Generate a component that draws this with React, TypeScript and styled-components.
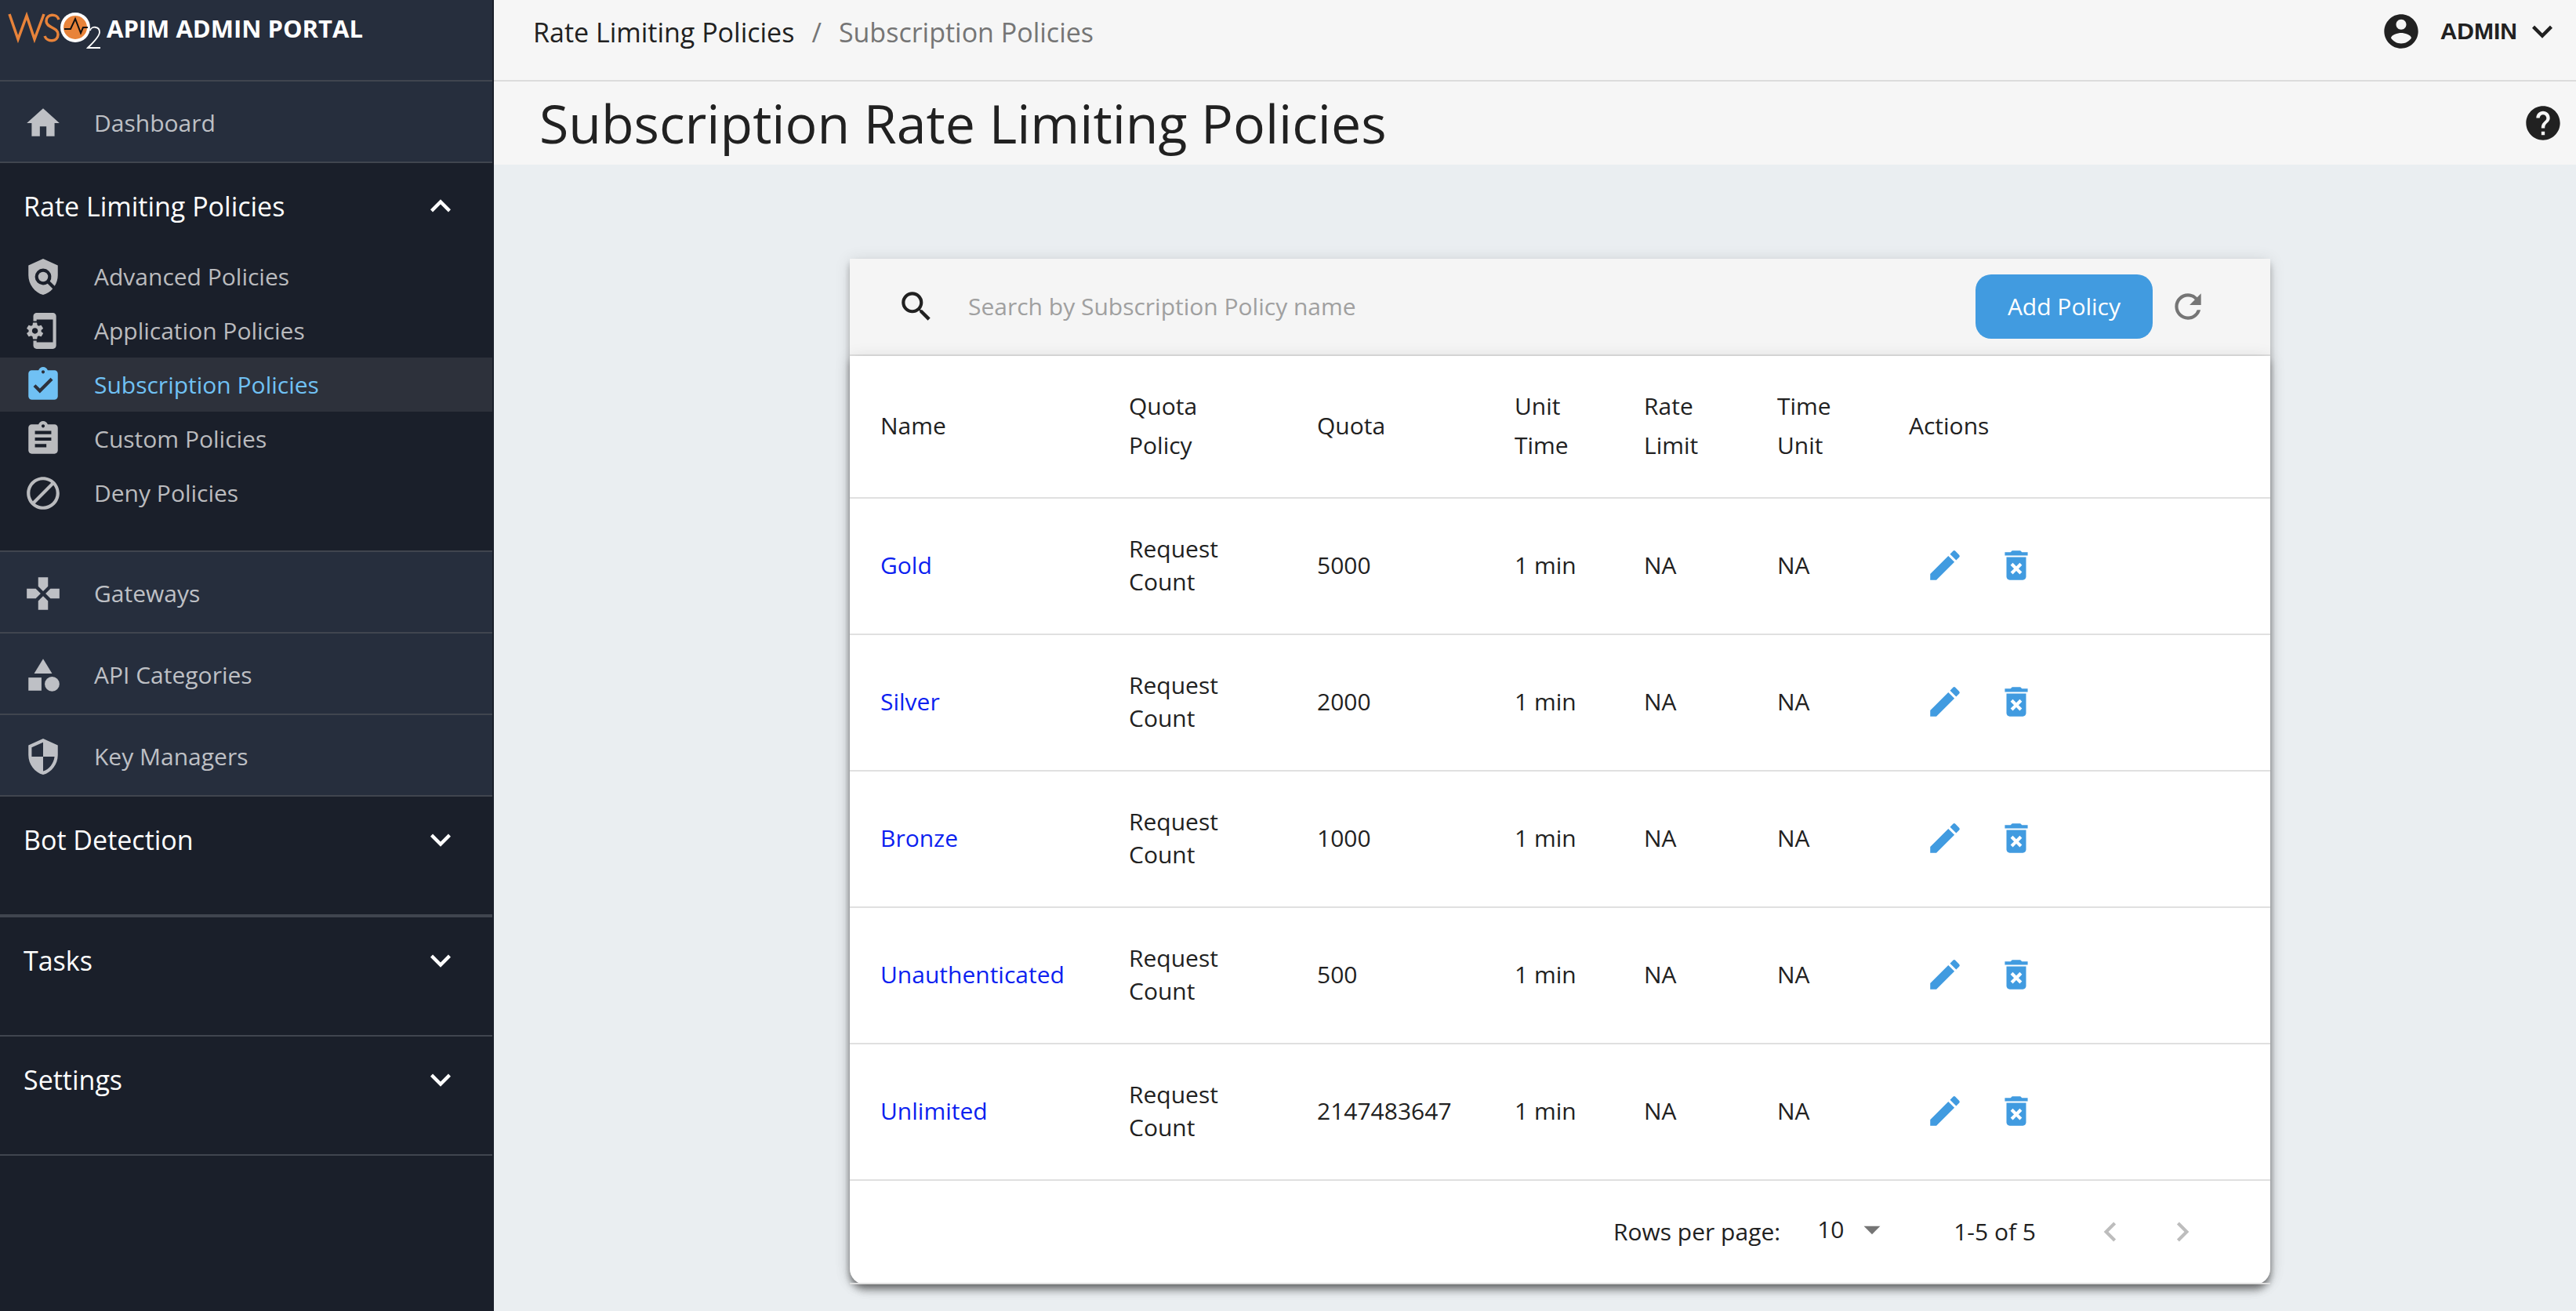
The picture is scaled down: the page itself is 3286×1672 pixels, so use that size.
import React from "react";
import styled, { createGlobalStyle } from "styled-components";
import {
  MdHome,
  MdPolicy,
  MdPhonelinkSetup,
  MdAssignmentTurnedIn,
  MdAssignment,
  MdBlock,
  MdGamepad,
  MdCategory,
  MdSecurity,
  MdHelp,
  MdSearch,
  MdRefresh,
  MdEdit,
  MdDeleteForever,
  MdChevronLeft,
  MdChevronRight,
  MdExpandMore,
  MdExpandLess,
  MdArrowDropDown,
} from "react-icons/md";

const GlobalStyle = createGlobalStyle`
  *, *::before, *::after { box-sizing: border-box; }
  body {
    margin: 0;
    background: #eaeef1;
    color: #212121;
    font-family: "Open Sans", "Noto Sans", sans-serif;
    font-size: 30px;
    line-height: 42px;
  }
  button, input, select { font: inherit; color: inherit; margin: 0; }
  a { text-decoration: none; }
`;

const Page = styled.div`
  display: flex;
  min-height: 100vh;
`;

/* ---------- sidebar ---------- */

const Sidebar = styled.nav`
  flex: 0 0 630px;
  background: #1a1f2a;
  border-right: 2px solid #1a1f2a;
`;

const Brand = styled.a`
  display: flex;
  align-items: flex-start;
  gap: 8px;
  height: 104px;
  padding: 10px 8px 0;
  background: #262e3d;
  border-bottom: 2px solid #40454f;
  color: #fff;
  font-size: 31px;
  font-weight: 700;
  line-height: 52px;
  white-space: nowrap;
`;

const NavRow = styled.a`
  display: flex;
  align-items: center;
  gap: 40px;
  height: 104px;
  padding: 3px 30px 0;
  background: #262e3d;
  border-bottom: 2px solid #40454f;
  color: #bec0c5;
`;

const Section = styled.section<{ $first?: boolean; $thick?: boolean }>`
  padding-bottom: ${(p) => (p.$first ? 39 : 40)}px;
  border-bottom: ${(p) => (p.$thick ? 4 : 2)}px solid #40454f;
`;

const SectionHeader = styled.button`
  display: flex;
  align-items: center;
  justify-content: space-between;
  width: 100%;
  height: 110px;
  padding: 0 40px 0 30px;
  border: 0;
  background: none;
  color: #fff;
  font-size: 34px;
  text-align: left;
`;

const SubItem = styled.a<{ $active?: boolean }>`
  display: flex;
  align-items: center;
  gap: 40px;
  height: 69px;
  padding: 0 30px;
  background: ${(p) => (p.$active ? "#2d313b" : "transparent")};
  color: ${(p) => (p.$active ? "#70c1f4" : "#babbbe")};
`;

/* ---------- main ---------- */

const Main = styled.main`
  flex: 1;
  min-width: 0;
`;

const TopBar = styled.header`
  display: flex;
  align-items: flex-start;
  justify-content: space-between;
  height: 104px;
  padding: 14px 17px 0 50px;
  background: #f6f6f6;
  border-bottom: 2px solid #dcdcdc;
`;

const Crumbs = styled.div`
  display: flex;
  gap: 22px;
  font-size: 34px;
  line-height: 54px;
  color: #757575;
`;

const CrumbLink = styled.a`
  color: #212121;
`;

const UserButton = styled.button`
  display: flex;
  align-items: center;
  padding: 0;
  border: 0;
  background: none;
  font-family: "Liberation Sans", Arial, sans-serif;
  font-weight: 700;
  line-height: 52px;
`;

const UserName = styled.span`
  margin: 0 6px 0 24px;
`;

const TitleBar = styled.div`
  display: flex;
  align-items: center;
  justify-content: space-between;
  height: 106px;
  padding: 0 16px 0 58px;
  background: #f6f6f6;
`;

const Title = styled.h1`
  margin: 0;
  font-size: 68px;
  font-weight: 400;
  line-height: 92px;
`;

const IconButton = styled.button`
  display: inline-flex;
  padding: 0;
  border: 0;
  background: none;
`;

const Content = styled.div`
  display: flex;
  justify-content: center;
  padding: 120px 0 32px 64px;
`;

const elevation = `
  box-shadow:
    0 4px 8px -2px rgba(0, 0, 0, 0.2),
    0 8px 10px rgba(0, 0, 0, 0.14),
    0 2px 20px rgba(0, 0, 0, 0.12);
`;

const Card = styled.div`
  flex: 1;
  max-width: 1812px;
  border-radius: 0 0 20px 20px;
  ${elevation}
`;

const Toolbar = styled.div`
  display: flex;
  align-items: center;
  height: 124px;
  padding: 0 80px 0 60px;
  background: #f5f5f5;
  border-bottom: 2px solid #e0e0e0;
`;

const SearchBox = styled.label`
  flex: 1;
  display: flex;
  align-items: center;
  gap: 41px;
`;

const SearchInput = styled.input`
  flex: 1;
  padding: 0;
  border: 0;
  outline: 0;
  background: none;
  &::placeholder {
    color: #a0a0a0;
    opacity: 1;
  }
`;

const AddButton = styled.button`
  height: 82px;
  margin-right: 20px;
  padding: 0 41px;
  border: 0;
  border-radius: 20px;
  background: #419be0;
  color: #fff;
`;

const TablePaper = styled.div`
  position: relative;
  background: #fff;
  border-radius: 0 0 20px 20px;
  ${elevation}
  &::after {
    content: "";
    position: absolute;
    inset: auto 0 0;
    height: 2px;
    background: #e0e0e0;
  }
`;

const Table = styled.table`
  width: 100%;
  table-layout: fixed;
  border-collapse: separate;
  border-spacing: 0;
`;

const Th = styled.th<{ $w?: number }>`
  width: ${(p) => (p.$w ? p.$w + "px" : "auto")};
  height: 182px;
  padding: 0 0 2px;
  border-bottom: 2px solid #e0e0e0;
  font-weight: 400;
  line-height: 50px;
  text-align: left;
  white-space: nowrap;
  &:first-child { padding-left: 39px; }
`;

const Td = styled.td`
  height: 174px;
  padding: 0 0 2px;
  border-bottom: 2px solid #e0e0e0;
  &:first-child { padding-left: 39px; }
`;

const PolicyLink = styled.a`
  color: #0c1ff0;
`;

const Actions = styled.div`
  display: flex;
  gap: 41px;
  padding-left: 21px;
  color: #419be0;
`;

const Footer = styled.div`
  display: flex;
  align-items: center;
  justify-content: flex-end;
  height: 132px;
  padding: 0 87px 2px 0;
`;

const PageSize = styled.div`
  display: flex;
  align-items: center;
  gap: 10px;
  margin: 0 79px 6px 47px;
  color: #757575;
`;

const Select = styled.select`
  appearance: none;
  padding: 0;
  border: 0;
  background: none;
  color: #212121;
`;

const Pager = styled.div`
  display: flex;
  gap: 42px;
  margin-left: 70px;
  color: #bdbdbd;
`;

function Logo() {
  return (
    <svg width="120" height="54" viewBox="0 0 120 54" fill="none" aria-label="WSO2">
      <path d="M4 8 L15 40 L26 10 L36 40 L48 8" stroke="#e8833a" strokeWidth="3.500" />
      <path
        d="M67 15 C65 7 51 7 51 17 C51 26 66 24 66 34 C66 44 52 44 49 36"
        stroke="#e8833a"
        strokeWidth="3.500"
      />
      <circle cx="88" cy="25" r="19" fill="#fff" />
      <circle cx="88" cy="25" r="15" fill="#e8833a" />
      <path d="M74 27 H82 L88 14 L95 32 L98 25 H104" stroke="#111" strokeWidth="2" />
      <path
        d="M107 29 C108 23 119 23 119 31 C119 37 110 45 104 51 H120"
        stroke="#fff"
        strokeWidth="1.800"
      />
    </svg>
  );
}

function AccountIcon() {
  return (
    <svg width="52" height="52" viewBox="0 0 24 24" fill="currentColor">
      <path d="M12 2C6.48 2 2 6.48 2 12s4.48 10 10 10 10-4.48 10-10S17.52 2 12 2zm0 3c1.66 0 3 1.34 3 3s-1.34 3-3 3-3-1.34-3-3 1.34-3 3-3zm0 14.200c-2.500 0-4.710-1.280-6-3.220.030-1.990 4-3.080 6-3.080 1.990 0 5.970 1.090 6 3.080-1.290 1.940-3.500 3.220-6 3.220z" />
    </svg>
  );
}

const policyItems = [
  { label: "Advanced Policies", Icon: MdPolicy },
  { label: "Application Policies", Icon: MdPhonelinkSetup },
  { label: "Subscription Policies", Icon: MdAssignmentTurnedIn, active: true },
  { label: "Custom Policies", Icon: MdAssignment },
  { label: "Deny Policies", Icon: MdBlock },
];

const navItems = [
  { label: "Gateways", Icon: MdGamepad },
  { label: "API Categories", Icon: MdCategory },
  { label: "Key Managers", Icon: MdSecurity },
];

const columns = [
  { label: ["Name"], width: 356 },
  { label: ["Quota", "Policy"], width: 240 },
  { label: ["Quota"], width: 252 },
  { label: ["Unit", "Time"], width: 165 },
  { label: ["Rate", "Limit"], width: 170 },
  { label: ["Time", "Unit"], width: 168 },
  { label: ["Actions"] },
];

const policies = [
  { name: "Gold", quota: "5000" },
  { name: "Silver", quota: "2000" },
  { name: "Bronze", quota: "1000" },
  { name: "Unauthenticated", quota: "500" },
  { name: "Unlimited", quota: "2147483647" },
];

export default function App() {
  return (
    <>
      <GlobalStyle />
      <Page>
        <Sidebar>
          <Brand href="#">
            <Logo />
            APIM ADMIN PORTAL
          </Brand>
          <NavRow href="#">
            <MdHome size={50} />
            Dashboard
          </NavRow>
          <Section $first>
            <SectionHeader>
              Rate Limiting Policies
              <MdExpandLess size={52} />
            </SectionHeader>
            {policyItems.map(({ label, Icon, active }) => (
              <SubItem href="#" key={label} $active={active}>
                <Icon size={50} />
                {label}
              </SubItem>
            ))}
          </Section>
          {navItems.map(({ label, Icon }) => (
            <NavRow href="#" key={label}>
              <Icon size={50} />
              {label}
            </NavRow>
          ))}
          {["Bot Detection", "Tasks", "Settings"].map((label, i) => (
            <Section key={label} $thick={i === 0}>
              <SectionHeader>
                {label}
                <MdExpandMore size={52} />
              </SectionHeader>
            </Section>
          ))}
        </Sidebar>
        <Main>
          <TopBar>
            <Crumbs>
              <CrumbLink href="#">Rate Limiting Policies</CrumbLink>
              <span>/</span>
              <span>Subscription Policies</span>
            </Crumbs>
            <UserButton>
              <AccountIcon />
              <UserName>ADMIN</UserName>
              <MdExpandMore size={52} />
            </UserButton>
          </TopBar>
          <TitleBar>
            <Title>Subscription Rate Limiting Policies</Title>
            <IconButton aria-label="Help">
              <MdHelp size={52} />
            </IconButton>
          </TitleBar>
          <Content>
            <Card>
              <Toolbar>
                <SearchBox>
                  <MdSearch size={50} />
                  <SearchInput
                    aria-label="Search by Subscription Policy name"
                    placeholder="Search by Subscription Policy name"
                  />
                </SearchBox>
                <AddButton>Add Policy</AddButton>
                <IconButton aria-label="Reload">
                  <MdRefresh size={50} color="#757575" />
                </IconButton>
              </Toolbar>
              <TablePaper>
                <Table>
                  <thead>
                    <tr>
                      {columns.map((c, i) => (
                        <Th key={i} $w={c.width}>
                          {c.label.map((line, j) => (
                            <React.Fragment key={line}>
                              {j > 0 && <br />}
                              {line}
                            </React.Fragment>
                          ))}
                        </Th>
                      ))}
                    </tr>
                  </thead>
                  <tbody>
                    {policies.map((p) => (
                      <tr key={p.name}>
                        <Td>
                          <PolicyLink href="#">{p.name}</PolicyLink>
                        </Td>
                        <Td>
                          Request
                          <br />
                          Count
                        </Td>
                        <Td>{p.quota}</Td>
                        <Td>1 min</Td>
                        <Td>NA</Td>
                        <Td>NA</Td>
                        <Td>
                          <Actions>
                            <IconButton aria-label={"Edit " + p.name}>
                              <MdEdit size={50} color="#419be0" />
                            </IconButton>
                            <IconButton aria-label={"Delete " + p.name}>
                              <MdDeleteForever size={50} color="#419be0" />
                            </IconButton>
                          </Actions>
                        </Td>
                      </tr>
                    ))}
                  </tbody>
                </Table>
                <Footer>
                  <label htmlFor="page-size">Rows per page:</label>
                  <PageSize>
                    <Select id="page-size" defaultValue="10">
                      <option>10</option>
                    </Select>
                    <MdArrowDropDown size={50} />
                  </PageSize>
                  <span>1-5 of 5</span>
                  <Pager>
                    <IconButton aria-label="Previous page" disabled>
                      <MdChevronLeft size={50} color="#bdbdbd" />
                    </IconButton>
                    <IconButton aria-label="Next page" disabled>
                      <MdChevronRight size={50} color="#bdbdbd" />
                    </IconButton>
                  </Pager>
                </Footer>
              </TablePaper>
            </Card>
          </Content>
        </Main>
      </Page>
    </>
  );
}
